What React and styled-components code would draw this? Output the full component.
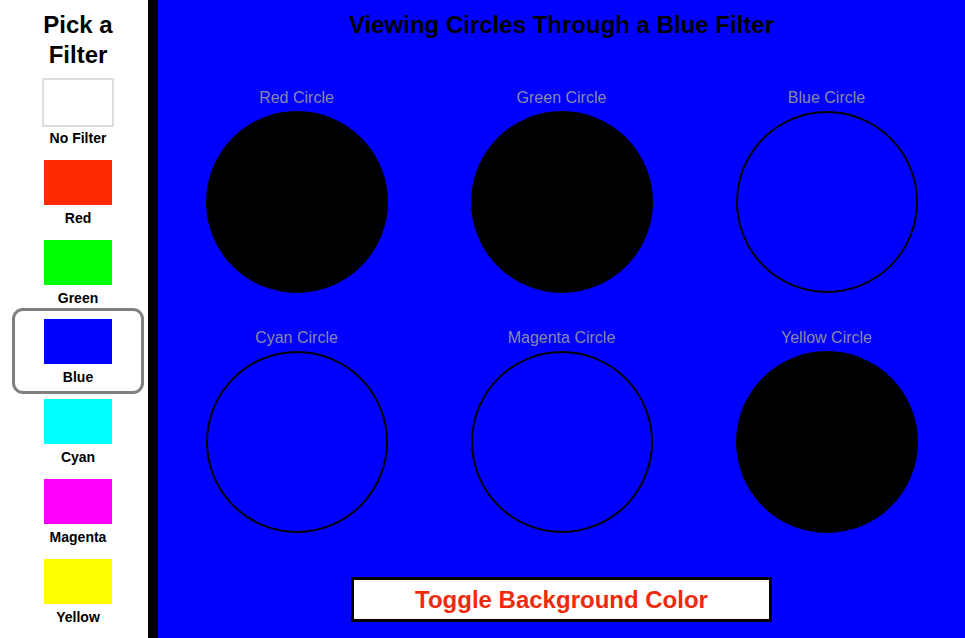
import React, { useState } from "react";
import styled, { createGlobalStyle } from "styled-components";

const Global = createGlobalStyle`
  html, body { margin: 0; padding: 0; }
  body { font-family: "Liberation Sans", Arial, sans-serif; }
`;

const Page = styled.div`
  display: flex;
  width: 965px;
  height: 638px;
  overflow: hidden;
`;

const Sidebar = styled.aside`
  width: 148px;
  flex: none;
  background: #ffffff;
  padding: 10px 0 0 15px;
  box-sizing: border-box;
  display: flex;
  flex-direction: column;
`;

const SideTitle = styled.h2`
  margin: 0 0 2px 0;
  width: 126px;
  text-align: center;
  font-size: 24px;
  line-height: 30px;
  font-weight: bold;
  color: #000;
`;

const Option = styled.div`
  width: 126px;
  height: 79.8px;
  flex: none;
  box-sizing: border-box;
  padding-top: 8px;
  display: flex;
  flex-direction: column;
  align-items: center;
  border-radius: 8px;
  outline: ${(p) => (p.$selected ? "3px solid #808080" : "none")};
  cursor: pointer;
`;

const Swatch = styled.div`
  width: 68px;
  height: 45px;
  background: ${(p) => p.$color};
  box-shadow: ${(p) => (p.$empty ? "0 0 0 2px #dddddd" : "none")};
`;

const OptionLabel = styled.div`
  margin-top: 5px;
  font-size: 14px;
  line-height: 16px;
  font-weight: bold;
  color: #000;
`;

const Main = styled.main`
  flex: 1;
  background: ${(p) => p.$bg};
  border-left: 10px solid #000;
  display: flex;
  flex-direction: column;
  align-items: center;
  padding-top: 11px;
  box-sizing: border-box;
`;

const Title = styled.h1`
  margin: 0;
  font-size: 24px;
  line-height: 28px;
  font-weight: bold;
  color: #000;
`;

const Grid = styled.div`
  margin-top: 50px;
  display: grid;
  grid-template-columns: repeat(3, 265px);
  row-gap: 36px;
`;

const Cell = styled.div`
  display: flex;
  flex-direction: column;
  align-items: center;
`;

const CircleLabel = styled.div`
  font-size: 16px;
  line-height: 18px;
  color: #8888a8;
  margin-bottom: 4px;
`;

const Circle = styled.div`
  width: 182px;
  height: 182px;
  box-sizing: border-box;
  border-radius: 50%;
  border: 2px solid #000;
  background: ${(p) => p.$fill};
`;

const ToggleButton = styled.button`
  margin-top: 44px;
  width: 421px;
  height: 45px;
  box-sizing: border-box;
  border: 3px solid #000;
  background: #fff;
  color: #ee2a0c;
  font-family: "Liberation Sans", Arial, sans-serif;
  font-size: 24px;
  font-weight: bold;
  padding: 0;
  cursor: pointer;
`;

const filters = [
  { name: "No Filter", color: "#ffffff", empty: true },
  { name: "Red", color: "#ff2a00" },
  { name: "Green", color: "#00ff00" },
  { name: "Blue", color: "#0000ff" },
  { name: "Cyan", color: "#00ffff" },
  { name: "Magenta", color: "#ff00ff" },
  { name: "Yellow", color: "#ffff00" },
];

const circles = [
  { name: "Red Circle", fill: "#000000" },
  { name: "Green Circle", fill: "#000000" },
  { name: "Blue Circle", fill: "#0000ff" },
  { name: "Cyan Circle", fill: "#0000ff" },
  { name: "Magenta Circle", fill: "#0000ff" },
  { name: "Yellow Circle", fill: "#000000" },
];

export default function App() {
  const [selected, setSelected] = useState("Blue");
  const [white, setWhite] = useState(false);
  return (
    <>
      <Global />
      <Page>
        <Sidebar>
          <SideTitle>Pick a Filter</SideTitle>
          {filters.map((f) => (
            <Option
              key={f.name}
              $selected={selected === f.name}
              onClick={() => setSelected(f.name)}
            >
              <Swatch $color={f.color} $empty={f.empty} />
              <OptionLabel>{f.name}</OptionLabel>
            </Option>
          ))}
        </Sidebar>
        <Main $bg={white ? "#ffffff" : "#0000ff"}>
          <Title>Viewing Circles Through a Blue Filter</Title>
          <Grid>
            {circles.map((c) => (
              <Cell key={c.name}>
                <CircleLabel>{c.name}</CircleLabel>
                <Circle $fill={c.fill} />
              </Cell>
            ))}
          </Grid>
          <ToggleButton onClick={() => setWhite((w) => !w)}>
            Toggle Background Color
          </ToggleButton>
        </Main>
      </Page>
    </>
  );
}
